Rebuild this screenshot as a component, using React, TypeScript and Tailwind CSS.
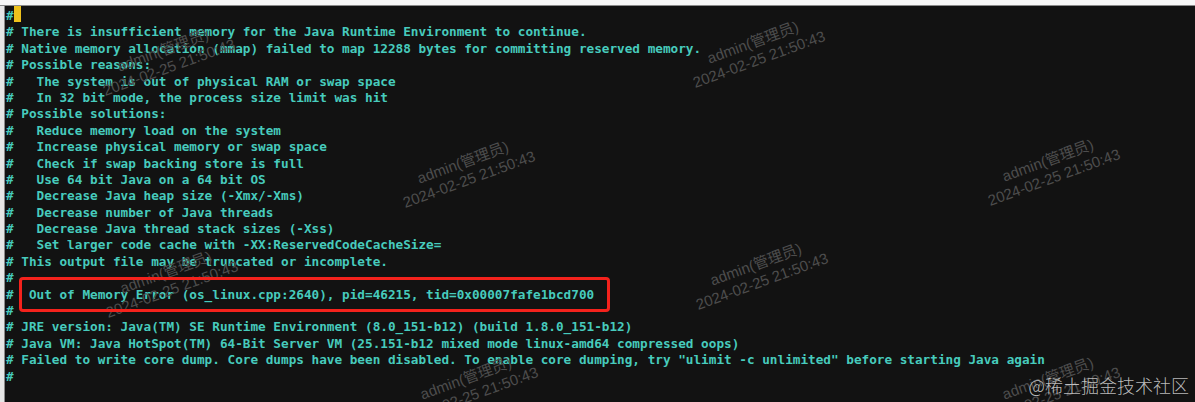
const lines: string[] = [
  '#',
  '# There is insufficient memory for the Java Runtime Environment to continue.',
  '# Native memory allocation (mmap) failed to map 12288 bytes for committing reserved memory.',
  '# Possible reasons:',
  '#   The system is out of physical RAM or swap space',
  '#   In 32 bit mode, the process size limit was hit',
  '# Possible solutions:',
  '#   Reduce memory load on the system',
  '#   Increase physical memory or swap space',
  '#   Check if swap backing store is full',
  '#   Use 64 bit Java on a 64 bit OS',
  '#   Decrease Java heap size (-Xmx/-Xms)',
  '#   Decrease number of Java threads',
  '#   Decrease Java thread stack sizes (-Xss)',
  '#   Set larger code cache with -XX:ReservedCodeCacheSize=',
  '# This output file may be truncated or incomplete.',
  '#',
  '#  Out of Memory Error (os_linux.cpp:2640), pid=46215, tid=0x00007fafe1bcd700',
  '#',
  '# JRE version: Java(TM) SE Runtime Environment (8.0_151-b12) (build 1.8.0_151-b12)',
  '# Java VM: Java HotSpot(TM) 64-Bit Server VM (25.151-b12 mixed mode linux-amd64 compressed oops)',
  '# Failed to write core dump. Core dumps have been disabled. To enable core dumping, try "ulimit -c unlimited" before starting Java again',
  '#',
]

// watermark centres, picked off the screenshot
const marks = [
  { x: 167, y: 60 },
  { x: 757, y: 52 },
  { x: 467, y: 172 },
  { x: 1052, y: 170 },
  { x: 170, y: 282 },
  { x: 760, y: 274 },
  { x: 470, y: 388 },
  { x: 1052, y: 388 },
]

function Watermark({ x, y }: { x: number; y: number }) {
  return (
    <div
      className="absolute -translate-x-1/2 -translate-y-1/2 -rotate-[20deg] text-center text-[15px] leading-[18px] text-[#4d4d4d] whitespace-nowrap pointer-events-none"
      style={{ left: x, top: y, fontFamily: '"Liberation Sans", "Noto Sans CJK SC", sans-serif' }}
    >
      <div>admin(管理员)</div>
      <div>2024-02-25 21:50:43</div>
    </div>
  )
}

export default function App() {
  return (
    <div className="w-[1195px] h-[402px] overflow-hidden bg-[#f6f6f6] flex flex-col">
      <div className="h-[6px] bg-[#f7f7f7] border-b border-[#8a8a8a] shrink-0" />
      <div className="flex flex-1 min-h-0">
        <div className="w-[5px] bg-[#e6e6e6] border-r border-[#8a8a8a] shrink-0" />
        <div className="relative flex-1 bg-[#121212] pl-px pt-[2px] overflow-hidden">
          <pre
            className="font-bold text-[12.7px] leading-[16.4px] text-[#47cbbd] m-0"
            style={{ fontFamily: '"DejaVu Sans Mono", "Liberation Mono", monospace' }}
          >
            {lines.map((l, i) => (
              <div key={i} className="h-[16.4px]">
                {l}
                {i === 0 && <span className="inline-block align-top w-[7.6px] h-[16px] -mt-[2px] bg-[#eec21c]" />}
              </div>
            ))}
          </pre>

          {marks.map((m, i) => (
            <Watermark key={i} x={m.x - 6} y={m.y - 7} />
          ))}

          <div className="absolute left-[14px] top-[271px] w-[591px] h-[35px] border-[3px] border-[#f4221c] rounded-[4px]" />

          <div
            className="absolute right-[6px] bottom-[6px] text-[18px] leading-[22px] text-[#dcdcdc]/85 font-light whitespace-nowrap"
            style={{ fontFamily: '"Noto Sans CJK SC", sans-serif' }}
          >
            @稀土掘金技术社区
          </div>
        </div>
      </div>
    </div>
  )
}
